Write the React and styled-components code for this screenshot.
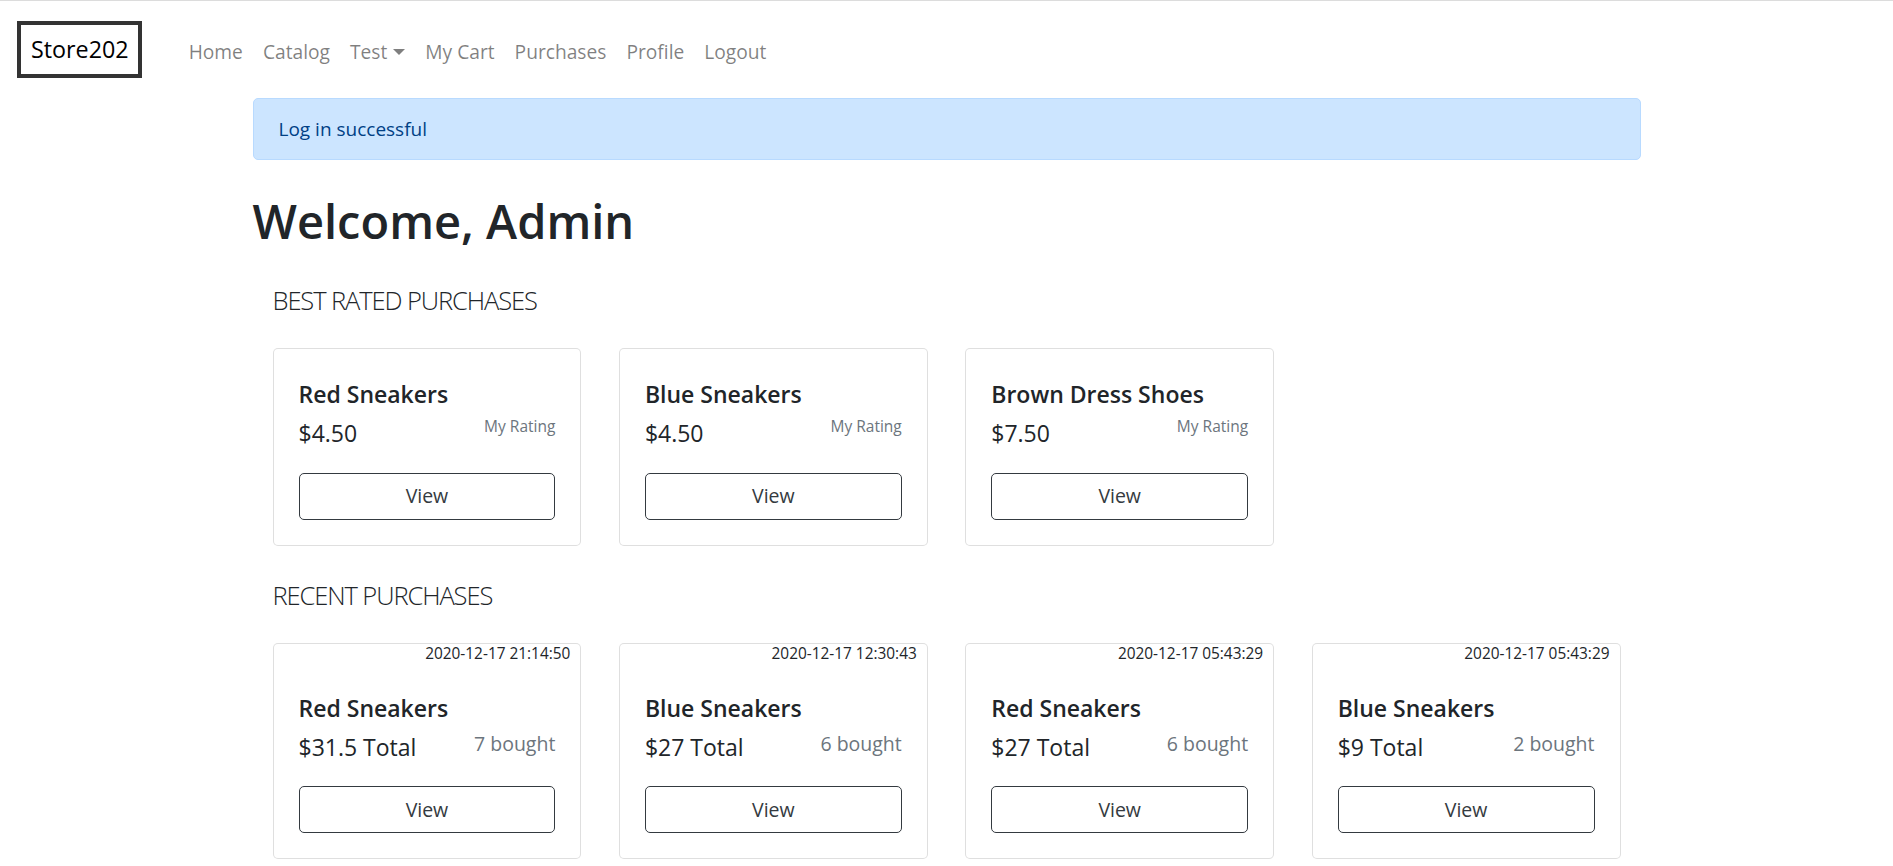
import React from 'react';
import styled, { createGlobalStyle } from 'styled-components';

const GlobalStyle = createGlobalStyle`
  body {
    margin: 0;
    background: #fff;
    color: #212529;
    font-family: 'Open Sans', 'Noto Sans', sans-serif;
  }
`;

const bestRated = [
  { name: 'Red Sneakers', price: '$4.50' },
  { name: 'Blue Sneakers', price: '$4.50' },
  { name: 'Brown Dress Shoes', price: '$7.50' },
];

const recent = [
  { name: 'Red Sneakers', total: '$31.5 Total', count: 7, date: '2020-12-17 21:14:50' },
  { name: 'Blue Sneakers', total: '$27 Total', count: 6, date: '2020-12-17 12:30:43' },
  { name: 'Red Sneakers', total: '$27 Total', count: 6, date: '2020-12-17 05:43:29' },
  { name: 'Blue Sneakers', total: '$9 Total', count: 2, date: '2020-12-17 05:43:29' },
];

const links = ['Home', 'Catalog', 'Test', 'My Cart', 'Purchases', 'Profile', 'Logout'];

const App = () => {
  return (
    <Page>
      <GlobalStyle />
      <Navbar>
        <Brand href='#'>Store202</Brand>
        <NavList>
          {links.map((link) => (
            <li key={link}>
              <NavLink href='#'>
                {link}
                {link === 'Test' && <Caret />}
              </NavLink>
            </li>
          ))}
        </NavList>
      </Navbar>
      <Main>
        <Alert>Log in successful</Alert>
        <Welcome>Welcome, Admin</Welcome>
        <Section>
          <SectionTitle>BEST RATED PURCHASES</SectionTitle>
          <CardGrid>
            {bestRated.map((item) => (
              <Card key={item.name}>
                <CardBody>
                  <CardTitle>{item.name}</CardTitle>
                  <PriceRow>
                    <Price>{item.price}</Price>
                    <Note $size={15.5}>My Rating</Note>
                  </PriceRow>
                  <ViewButton>View</ViewButton>
                </CardBody>
              </Card>
            ))}
          </CardGrid>
        </Section>
        <Section>
          <SectionTitle>RECENT PURCHASES</SectionTitle>
          <CardGrid>
            {recent.map((item) => (
              <Card key={item.date + item.name}>
                <Stamp>{item.date}</Stamp>
                <CardBody>
                  <CardTitle>{item.name}</CardTitle>
                  <PriceRow>
                    <Price>{item.total}</Price>
                    <Note $size={19.5}>{item.count} bought</Note>
                  </PriceRow>
                  <ViewButton>View</ViewButton>
                </CardBody>
              </Card>
            ))}
          </CardGrid>
        </Section>
      </Main>
    </Page>
  );
};

export default App;

const Page = styled.div`
  border-top: 1px solid #dcdcdc;
  min-height: 865px;
`;

const Navbar = styled.nav`
  display: flex;
  align-items: center;
  padding: 20px 0 10px 17px;
`;

const Brand = styled.a`
  display: block;
  border: 4px solid #333;
  padding: 6px 9px 6px 10px;
  font-size: 23.3px;
  line-height: 1.6;
  color: #000;
  text-decoration: none;
`;

const NavList = styled.ul`
  display: flex;
  list-style: none;
  margin: 0 0 0 37px;
  padding: 0;
`;

const NavLink = styled.a`
  display: flex;
  align-items: center;
  padding: 13px 10px 7px;
  font-size: 19.2px;
  line-height: 1.5;
  color: rgba(0, 0, 0, 0.5);
  text-decoration: none;
`;

const Caret = styled.span`
  width: 0;
  height: 0;
  margin-left: 6px;
  margin-top: -2px;
  border-top: 6px solid rgba(0, 0, 0, 0.5);
  border-left: 6px solid transparent;
  border-right: 6px solid transparent;
`;

const Main = styled.main`
  width: 1388px;
  margin: 10px auto 0;
`;

const Alert = styled.div`
  background: #cce5ff;
  border: 1px solid #b8daff;
  border-radius: 5px;
  color: #004085;
  padding: 15px 25px;
  font-size: 19px;
  line-height: 30px;
`;

const Welcome = styled.h1`
  margin: 31px 0 0;
  font-size: 47px;
  font-weight: 600;
  line-height: 60px;
  color: #212529;
`;

const Section = styled.section`
  padding: 0 20px;
  margin-top: 32px;
`;

const SectionTitle = styled.h4`
  margin: 0 0 31px;
  font-size: 25.5px;
  font-weight: 300;
  letter-spacing: -1.1px;
  line-height: 34px;
  color: #212529;
`;

const CardGrid = styled.div`
  display: grid;
  grid-template-columns: repeat(4, 1fr);
  column-gap: 37.5px;
`;

const Card = styled.div`
  border: 1px solid rgba(0, 0, 0, 0.125);
  border-radius: 5px;
  background: #fff;
`;

const Stamp = styled.div`
  text-align: right;
  padding: 1px 10px 0;
  font-size: 15.4px;
  line-height: 18px;
  color: #212529;
`;

const CardBody = styled.div`
  padding: 27px 25px 25px;
`;

const CardTitle = styled.h5`
  margin: 0;
  font-size: 23px;
  font-weight: 600;
  line-height: 37.5px;
`;

const PriceRow = styled.div`
  display: flex;
  justify-content: space-between;
  align-items: flex-start;
  margin-top: 1.5px;
`;

const Price = styled.span`
  font-size: 23px;
  line-height: 37.5px;
`;

const Note = styled.small`
  font-size: ${(p) => p.$size}px;
  line-height: 1.5;
  color: #6c757d;
`;

const ViewButton = styled.button`
  display: block;
  width: 100%;
  margin-top: 20px;
  padding: 7.5px 15px;
  border: 1px solid #343a40;
  border-radius: 5px;
  background: transparent;
  color: #343a40;
  font-family: inherit;
  font-size: 19.5px;
  line-height: 30px;
  cursor: pointer;
`;
